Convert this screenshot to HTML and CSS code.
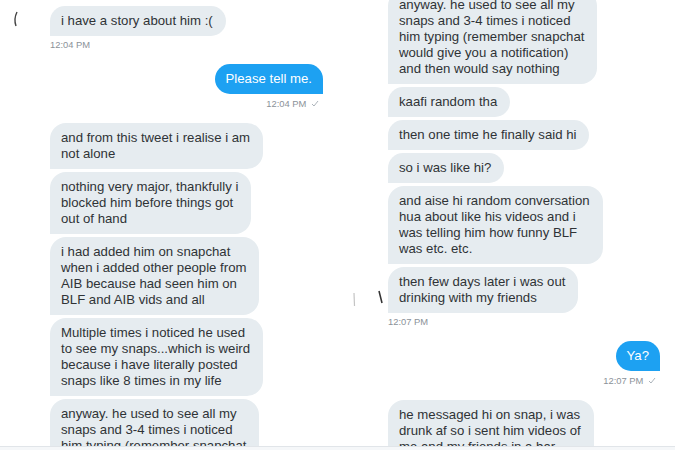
FILE: index.html
```html
<!DOCTYPE html>
<html lang="en">
<head>
    <meta charset="UTF-8">
    <meta name="viewport" content="width=device-width, initial-scale=1.0">
    <title>Messages</title>
    <link rel="stylesheet" href="styles.css">
</head>
<body>
    <div class="screens">
        <!-- first screenshot -->
        <div class="pane">
            <div class="thread">
                <div class="row">
                    <div class="avatar">
                        <svg width="50" height="30" viewBox="0 0 50 30"><path d="M17 6 Q13.5 13 16 20" fill="none" stroke="#444" stroke-width="1.4"/></svg>
                    </div>
                    <div class="bubble">i have a story about him :(</div>
                </div>
                <div class="time">12:04 PM</div>

                <div class="row out">
                    <div class="bubble sent">Please tell me.</div>
                </div>
                <div class="time out">12:04 PM <svg class="check" width="8" height="7" viewBox="0 0 8 7"><path d="M1 4 L3 6 L7 1" fill="none" stroke="#a3abb3" stroke-width="0.9"/></svg></div>

                <div class="row"><div class="avatar"></div><div class="bubble">and from this tweet i realise i am<br>not alone</div></div>
                <div class="row"><div class="avatar"></div><div class="bubble">nothing very major, thankfully i<br>blocked him before things got<br>out of hand</div></div>
                <div class="row"><div class="avatar"></div><div class="bubble">i had added him on snapchat<br>when i added other people from<br>AIB because had seen him on<br>BLF and AIB vids and all</div></div>
                <div class="row"><div class="avatar"></div><div class="bubble">Multiple times i noticed he used<br>to see my snaps...which is weird<br>because i have literally posted<br>snaps like 8 times in my life</div></div>
                <div class="row"><div class="avatar"></div><div class="bubble">anyway. he used to see all my<br>snaps and 3-4 times i noticed<br>him typing (remember snapchat<br>would give you a notification)<br>and then would say nothing</div></div>
            </div>
            <div class="composer"></div>
        </div>

        <!-- second screenshot -->
        <div class="pane">
            <div class="thread scrolled">
                <div class="row"><div class="avatar"></div><div class="bubble">anyway. he used to see all my<br>snaps and 3-4 times i noticed<br>him typing (remember snapchat<br>would give you a notification)<br>and then would say nothing</div></div>
                <div class="row"><div class="avatar"></div><div class="bubble">kaafi random tha</div></div>
                <div class="row"><div class="avatar"></div><div class="bubble">then one time he finally said hi</div></div>
                <div class="row"><div class="avatar"></div><div class="bubble">so i was like hi?</div></div>
                <div class="row"><div class="avatar"></div><div class="bubble">and aise hi random conversation<br>hua about like his videos and i<br>was telling him how funny BLF<br>was etc. etc.</div></div>
                <div class="row">
                    <div class="avatar">
                        <svg width="50" height="46" viewBox="0 0 50 46"><path d="M16 26 L16.5 39" fill="none" stroke="#c4c4c4" stroke-width="1.2"/><path d="M41 24 L44 36" fill="none" stroke="#333" stroke-width="1.6"/></svg>
                    </div>
                    <div class="bubble">then few days later i was out<br>drinking with my friends</div>
                </div>
                <div class="time">12:07 PM</div>

                <div class="row out">
                    <div class="bubble sent">Ya?</div>
                </div>
                <div class="time out">12:07 PM <svg class="check" width="8" height="7" viewBox="0 0 8 7"><path d="M1 4 L3 6 L7 1" fill="none" stroke="#a3abb3" stroke-width="0.9"/></svg></div>

                <div class="row"><div class="avatar"></div><div class="bubble">he messaged hi on snap, i was<br>drunk af so i sent him videos of<br>me and my friends in a bar</div></div>
            </div>
            <div class="composer"></div>
        </div>
    </div>
</body>
</html>
```

FILE: styles.css
```css
body {
    margin: 0;
    font-family: "Liberation Sans", Arial, sans-serif;
    background: #fff;
    color: #2f3336;
}
.screens {
    display: flex;
    width: 675px;
    height: 450px;
}
.pane {
    width: 338px;
    height: 450px;
    display: flex;
    flex-direction: column;
}
.pane + .pane {
    width: 337px;
}
.thread {
    flex: 1;
    overflow: hidden;
    padding: 6px 15px 0 0;
}
.thread.scrolled {
    padding-top: 0;
}
.thread.scrolled > .row:first-child {
    margin-top: -10px;
}
.row {
    display: flex;
    align-items: flex-end;
    margin-bottom: 3px;
}
.row.out {
    justify-content: flex-end;
}
.avatar {
    width: 50px;
    flex-shrink: 0;
    align-self: stretch;
}
.avatar svg {
    display: block;
}
.bubble {
    box-sizing: border-box;
    padding: 7px 13px 7px 11px;
    font-size: 13.2px;
    line-height: 16px;
    white-space: nowrap;
    background: #e6ecf0;
    border-radius: 16px 16px 16px 0;
}
.bubble.sent {
    padding-right: 11px;
    background: #1da1f2;
    color: #fff;
    border-radius: 16px 16px 0 16px;
}
.time {
    margin: 1px 0 13px 50px;
    font-size: 9.4px;
    line-height: 12px;
    color: #8b9299;
}
.time.out {
    margin-left: 0;
    margin-top: 4px;
    padding-right: 4px;
    text-align: right;
}
.check {
    margin-left: 2px;
}
.composer {
    height: 3px;
    border-top: 1px solid #e1e5e9;
    background: #f5f7f9;
}
```
